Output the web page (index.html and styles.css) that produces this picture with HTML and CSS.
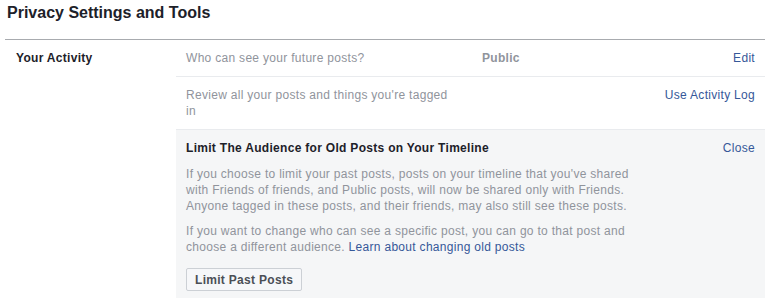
FILE: index.html
```html
<!DOCTYPE html>
<html lang="en">
  <head>
    <meta charset="UTF-8" />
    <title>Privacy Settings and Tools</title>
    <link rel="stylesheet" href="styles.css">
  </head>
  <body>
    <div class="page">
      <h1 class="page-title">Privacy Settings and Tools</h1>
      <div class="settings-group">
        <div class="group-label">Your Activity</div>
        <div class="group-items">
          <div class="setting-row">
            <div class="setting-desc">Who can see your future posts?</div>
            <div class="setting-value">Public</div>
            <a class="setting-action" href="#">Edit</a>
          </div>
          <div class="setting-row">
            <div class="setting-desc">Review all your posts and things you're tagged in</div>
            <div class="setting-value"></div>
            <a class="setting-action" href="#">Use Activity Log</a>
          </div>
          <div class="setting-panel">
            <div class="panel-head">
              <div class="panel-title">Limit The Audience for Old Posts on Your Timeline</div>
              <a class="setting-action" href="#">Close</a>
            </div>
            <p class="panel-text">If you choose to limit your past posts, posts on your timeline that you've shared with Friends of friends, and Public posts, will now be shared only with Friends. Anyone tagged in these posts, and their friends, may also still see these posts.</p>
            <p class="panel-text panel-text-second">If you want to change who can see a specific post, you can go to that post and choose a different audience. <a href="#">Learn about changing old posts</a></p>
            <button class="panel-button">Limit Past Posts</button>
          </div>
        </div>
      </div>
    </div>
  </body>
</html>
```

FILE: styles.css
```css
body {
  margin: 0;
  font-family: 'Liberation Sans', Arial, sans-serif;
  font-size: 12px;
  line-height: 16px;
  letter-spacing: 0.3px;
  color: #1d2129;
  background-color: white;
}
a {
  color: #365899;
  text-decoration: none;
}
.page {
  padding: 0 19px 0 5px;
}
.page-title {
  margin: 0;
  padding: 3px 0 0 2px;
  height: 39px;
  box-sizing: border-box;
  font-size: 16px;
  line-height: 20px;
  font-weight: bold;
  letter-spacing: 0;
}
.settings-group {
  display: flex;
  border-top: 1px solid #a8abaf;
}
.group-label {
  width: 160px;
  padding: 10px 0 0 11px;
  font-weight: bold;
}
.group-items {
  flex-grow: 1;
}
.setting-row {
  display: grid;
  grid-template-columns: 296px 1fr auto;
  padding: 10px 10px;
  border-bottom: 1px solid #e9ebee;
  color: #90949c;
}
.setting-desc {
  width: 272px;
}
.setting-value {
  font-weight: bold;
}
.setting-panel {
  background-color: #f5f6f7;
  padding: 10px 10px 12px;
  min-height: 160px;
}
.panel-head {
  display: flex;
  justify-content: space-between;
}
.panel-title {
  font-weight: bold;
}
.panel-text {
  margin: 10px 0 0;
  max-width: 456px;
  color: #90949c;
}
.panel-text-second {
  margin-top: 9px;
}
.panel-button {
  display: block;
  margin-top: 13px;
  height: 23px;
  padding: 0 8px;
  border: 1px solid #ccd0d5;
  border-radius: 2px;
  background-color: #f6f7f9;
  color: #4b4f56;
  font-family: 'Liberation Sans', Arial, sans-serif;
  font-size: 12px;
  font-weight: bold;
  letter-spacing: 0.3px;
}
```
